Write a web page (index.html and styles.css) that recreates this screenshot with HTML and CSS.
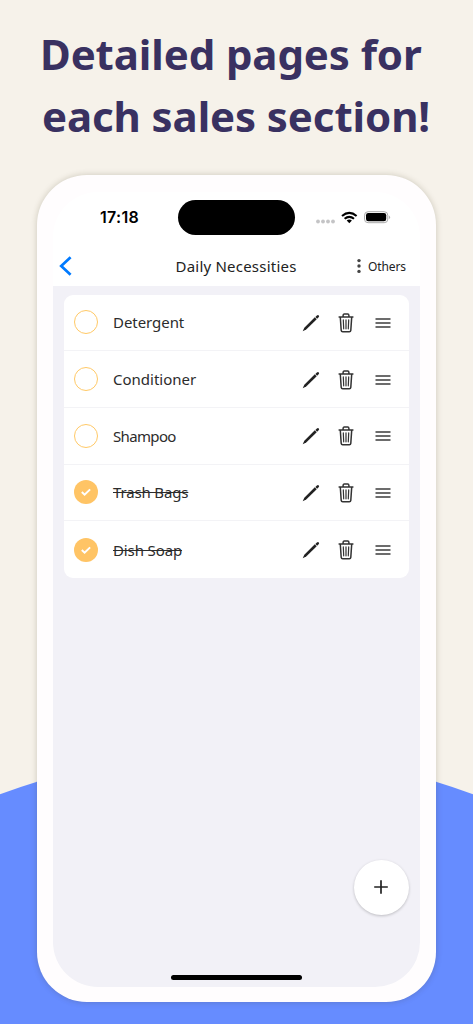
FILE: index.html
```
<!DOCTYPE html>
<html lang="en">
<head>
<meta charset="utf-8">
<title>Daily Necessities</title>
<link rel="stylesheet" href="styles.css">
</head>
<body>
<svg width="0" height="0" class="sprite" aria-hidden="true">
  <symbol id="pen" viewBox="0 0 18 18"><path d="M.7 17.3 L2.3 13.8 L12.8 3.3 L14.7 5.2 L4.2 15.6Z" fill="#222"/><path d="M13.4 2.9 L14.9 1.5 Q15.9 .6 16.8 1.4 Q17.6 2.3 16.6 3.3 L15.1 4.7Z" fill="#222"/></symbol>
  <symbol id="trash" viewBox="0 0 16 20"><g fill="none" stroke="#333" stroke-width="1.5" stroke-linecap="round" stroke-linejoin="round"><path d="M1.1 4H14.9M5.1 3.8V2.4Q5.1 1.1 6.3 1.1H9.7Q10.9 1.1 10.9 2.4V3.8M2.3 4.2L3.2 17.4Q3.3 18.7 4.7 18.7H11.3Q12.7 18.7 12.8 17.4L13.7 4.2"/><path d="M5.3 6.9L5.7 15.8M8 6.9V15.8M10.7 6.9L10.3 15.8" stroke-width="1.2"/></g></symbol>
  <symbol id="grip" viewBox="0 0 16 12"><path d="M.5 2H15.5M.5 6H15.5M.5 10H15.5" stroke="#3c3c3c" stroke-width="1.4" fill="none"/></symbol>
  <symbol id="check" viewBox="0 0 24 24"><path d="M7.8 12.1L10.6 14.7L16.1 9.4" fill="none" stroke="#fff" stroke-width="2"/></symbol>
</svg>
<main class="poster">
  <div class="hill"></div>
  <h1 class="headline"><span class="line1">Detailed pages for</span><span class="line2">each sales section!</span></h1>
  <section class="phone">
    <div class="screen">
      <div class="status">
        <span class="time">17:18</span>
        <span class="island"></span>
        <svg class="indicators" width="76" height="14" viewBox="0 0 76 14">
          <g fill="#c4c4c6"><circle cx="3" cy="9.5" r="1.9"/><circle cx="8" cy="9.5" r="1.9"/><circle cx="13" cy="9.5" r="1.9"/><circle cx="18" cy="9.5" r="1.9"/></g>
          <g fill="none" stroke="#000" stroke-width="2.1"><path d="M27 4Q34.3 -2.2 41.6 4"/><path d="M29.6 6.8Q34.3 3 39 6.8"/></g>
          <path d="M31.7 8.6Q34.3 6.6 36.9 8.6L34.3 11.2Z"/>
          <rect x="49.5" y="-.3" width="23.3" height="11" rx="3.6" fill="none" stroke="#aaa"/>
          <rect x="51" y="1.1" width="20.2" height="8.2" rx="2.2"/>
          <path d="M74.1 3.4Q76.4 5.2 74.1 7Z" fill="#aaa"/>
        </svg>
      </div>
      <header class="nav">
        <svg class="back" width="14" height="20" viewBox="0 0 14 20"><path d="M11.6 1.2L2.2 10L11.6 18.8" fill="none" stroke="#007aff" stroke-width="2.7"/></svg>
        <span class="title">Daily Necessities</span>
        <svg class="dots" width="4" height="16" viewBox="0 0 4 16" fill="#444"><circle cx="2" cy="2.6" r="1.7"/><circle cx="2" cy="8" r="1.7"/><circle cx="2" cy="13.4" r="1.7"/></svg>
        <span class="others">Others</span>
      </header>
      <div class="content">
        <ul class="list">
          <li class="row"><span class="tick"></span><span class="name detergent">Detergent</span><svg class="pen"><use href="#pen"/></svg><svg class="trash"><use href="#trash"/></svg><svg class="grip"><use href="#grip"/></svg></li>
          <li class="row"><span class="tick"></span><span class="name conditioner">Conditioner</span><svg class="pen"><use href="#pen"/></svg><svg class="trash"><use href="#trash"/></svg><svg class="grip"><use href="#grip"/></svg></li>
          <li class="row"><span class="tick"></span><span class="name shampoo">Shampoo</span><svg class="pen"><use href="#pen"/></svg><svg class="trash"><use href="#trash"/></svg><svg class="grip"><use href="#grip"/></svg></li>
          <li class="row"><span class="tick on"><svg><use href="#check"/></svg></span><span class="name done trashbags">Trash Bags</span><svg class="pen"><use href="#pen"/></svg><svg class="trash"><use href="#trash"/></svg><svg class="grip"><use href="#grip"/></svg></li>
          <li class="row"><span class="tick on"><svg><use href="#check"/></svg></span><span class="name done dishsoap">Dish Soap</span><svg class="pen"><use href="#pen"/></svg><svg class="trash"><use href="#trash"/></svg><svg class="grip"><use href="#grip"/></svg></li>
        </ul>
        <div class="add"><svg width="14" height="14" viewBox="0 0 14 14"><path d="M7 .2V13.8M.2 7H13.8" stroke="#222" stroke-width="1.7"/></svg></div>
        <div class="home"></div>
      </div>
    </div>
  </section>
</main>
</body>
</html>
```
FILE: styles.css
```
* { box-sizing: border-box; }
body { margin: 0; }
.sprite { position: absolute; }
.poster {
  position: relative;
  width: 473px;
  height: 1024px;
  overflow: hidden;
  background: #f6f2ea;
  font-family: "Noto Sans", sans-serif;
}
.hill {
  position: absolute;
  left: -445px;
  top: 752px;
  width: 1363px;
  height: 1363px;
  border-radius: 50%;
  background: #668cff;
}
.headline {
  position: relative;
  height: 175px;
  margin: 0;
  padding-top: 23px;
  color: #393161;
  font-size: 42px;
  font-weight: 700;
  line-height: 61.5px;
  letter-spacing: -.1px;
  white-space: nowrap;
}
.headline span { display: block; }
.line1 { padding-left: 40px; }
.line2 { padding-left: 42px; }
.phone {
  position: relative;
  width: 398.5px;
  height: 827px;
  margin-left: 37.3px;
  padding: 17px 15.7px 15px;
  border-radius: 50px;
  background: #fffdfe;
  box-shadow: 0 0 6px rgba(60, 50, 20, .22);
}
.screen {
  display: flex;
  flex-direction: column;
  height: 795px;
  overflow: hidden;
  border-radius: 45px;
  background: #fff;
}
.status {
  display: flex;
  align-items: flex-start;
  height: 56px;
  padding: 8px 0 0 47px;
}
.time {
  width: 78px;
  padding-top: 7px;
  font: 600 16px/20px Inter, sans-serif;
  letter-spacing: .3px;
  color: #000;
}
.island { width: 117px; height: 35px; border-radius: 18px; background: #000; }
.indicators { margin: 11.5px 0 0 20.5px; overflow: visible; }
.nav {
  display: flex;
  align-items: center;
  height: 38px;
  padding: 0 0 2px 6px;
  color: #222;
}
.title { width: 182px; margin-left: 102.5px; font-size: 15px; letter-spacing: .22px; white-space: nowrap; }
.others { margin-left: 6.5px; font-size: 12px; letter-spacing: -.1px; }
.content {
  position: relative;
  flex: 1;
  padding: 8.5px 11px;
  background: #f2f1f7;
}
.list { margin: 0; padding: 0; list-style: none; border-radius: 9px; background: #fff; }
.row {
  display: flex;
  align-items: center;
  height: 56.7px;
  padding-left: 10px;
  border-bottom: 1px solid #f3f3f6;
}
.row:last-child { border-bottom: 0; }
.tick { width: 24px; height: 24px; border: 1.4px solid #ffc966; border-radius: 50%; }
.tick.on { border: 0; background: #ffc465; }
.tick svg { display: block; width: 24px; height: 24px; }
.name { width: 189.3px; margin-left: 15px; color: #2c2c2c; font-size: 15px; line-height: 20px; white-space: nowrap; }
.detergent { letter-spacing: -.05px; }
.shampoo { letter-spacing: -.65px; }
.trashbags { letter-spacing: -.15px; }
.dishsoap { letter-spacing: -.12px; }
.done { text-decoration: line-through; }
.pen, .trash, .grip { margin-top: 1px; }
.pen { width: 18px; height: 18px; }
.trash { width: 16px; height: 20px; margin-left: 18px; }
.grip { width: 16px; height: 12px; margin-left: 20.7px; }
.add {
  position: absolute;
  right: 11px;
  top: 573.8px;
  display: flex;
  align-items: center;
  justify-content: center;
  width: 55px;
  height: 55px;
  padding-right: 2px;
  border-radius: 50%;
  background: #fff;
  box-shadow: 0 1px 3px rgba(0, 0, 0, .22);
}
.home {
  position: absolute;
  left: 118px;
  bottom: 7px;
  width: 131px;
  height: 5px;
  border-radius: 3px;
  background: #000;
}
```
